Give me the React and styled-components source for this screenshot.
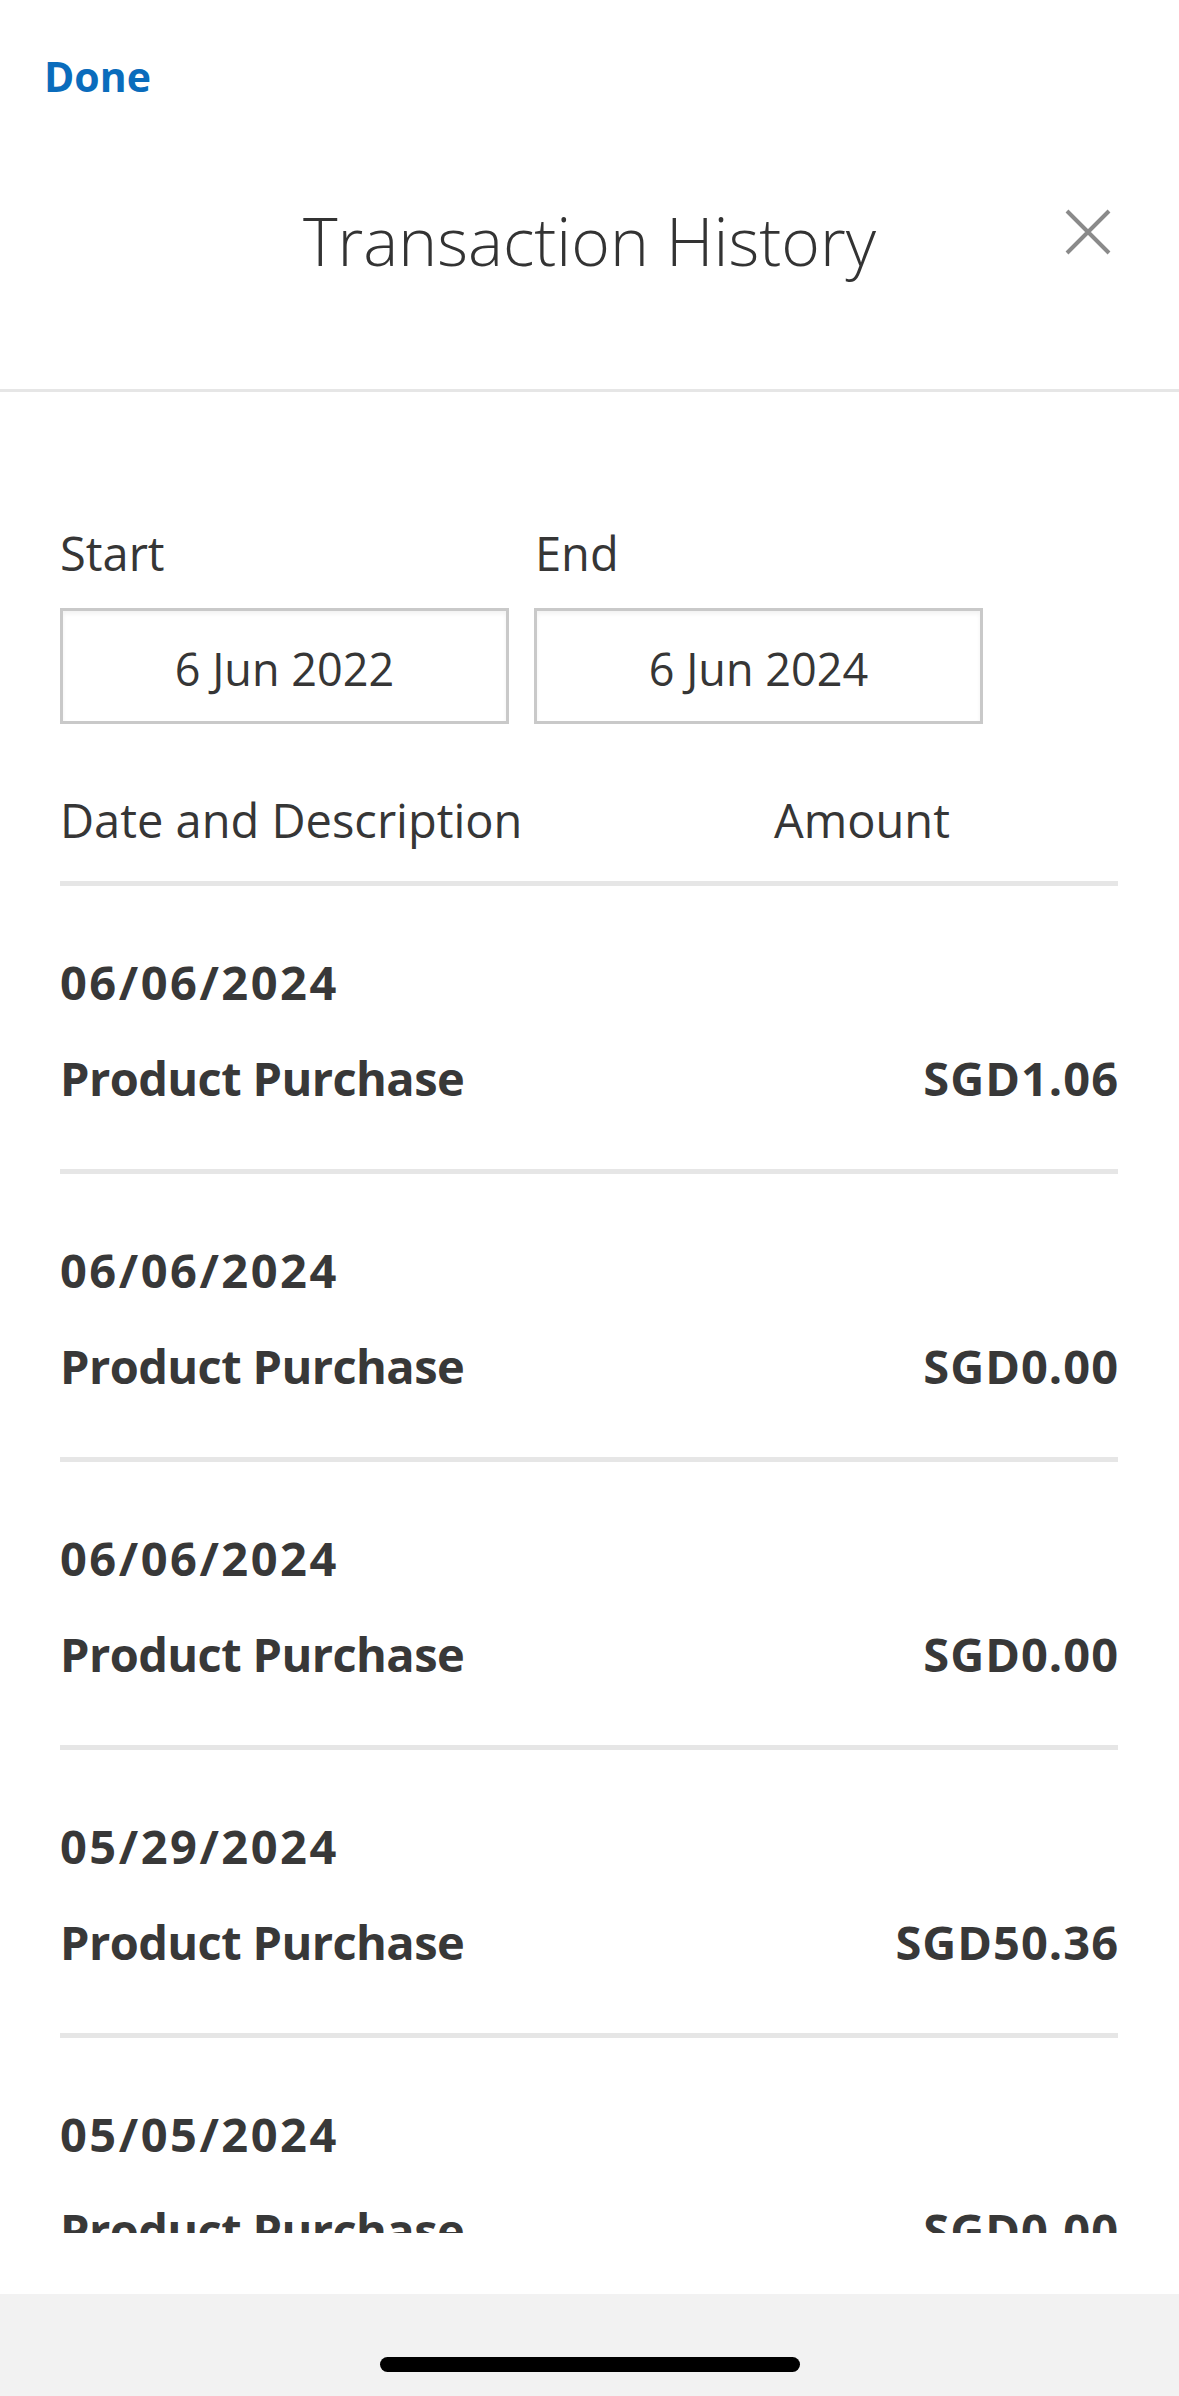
import React from 'react';
import styled, { createGlobalStyle } from 'styled-components';

const GlobalStyle = createGlobalStyle`
  * { box-sizing: border-box; }
  html, body { margin: 0; padding: 0; background: #fff; }
  body {
    font-family: "Open Sans", "Noto Sans", sans-serif;
    color: #363636;
  }
`;

const Page = styled.div`
  height: 2396px;
  display: flex;
  flex-direction: column;
  background: #fff;
`;

const Header = styled.header`
  padding-top: 56px;
  padding-bottom: 116px;
  border-bottom: 3px solid #e6e6e6;
`;

const DoneButton = styled.div`
  margin-left: 44px;
  font-size: 41px;
  line-height: 40px;
  font-weight: 700;
  color: #0a6cbc;
`;

const TitleRow = styled.div`
  margin-top: 111px;
  display: grid;
  grid-template-columns: 1fr auto 1fr;
  padding: 0 67px;
`;

const Title = styled.h1`
  grid-column: 2;
  margin: 0;
  font-size: 66px;
  line-height: 66px;
  font-weight: 300;
  color: #333;
`;

const CloseButton = styled.div`
  grid-column: 3;
  justify-self: end;
  align-self: start;
  margin-top: 1px;
  width: 48px;
  height: 48px;
`;

const Scroll = styled.div`
  flex: 1;
  min-height: 0;
  overflow: hidden;
  margin-bottom: 61px;
  padding: 138px 61px 0 60px;
`;

const RangeGrid = styled.div`
  display: grid;
  grid-template-columns: 449px 449px;
  column-gap: 25px;
`;

const RangeField = styled.div`
  display: flex;
  flex-direction: column;
`;

const FieldLabel = styled.div`
  font-size: 47px;
  line-height: 47px;
  padding-left: ${p => (p.$indent ? 1 : 0)}px;
  margin-bottom: 31px;
`;

const DateBox = styled.div`
  height: 116px;
  border: 3px solid #c9c9c9;
  box-shadow: inset 0 3px 4px rgba(0, 0, 0, 0.05);
  display: flex;
  align-items: center;
  justify-content: center;
  padding-top: 4px;
  font-size: 45px;
  line-height: 45px;
`;

const TableHead = styled.div`
  margin-top: 73px;
  display: grid;
  grid-template-columns: 714px 1fr;
  font-size: 47px;
  line-height: 47px;
  padding-bottom: 37px;
  border-bottom: 5px solid #e6e6e6;
`;

const Row = styled.div`
  padding: 73px 0 67px;
  border-bottom: 5px solid #e6e6e6;
  font-size: 47px;
  line-height: 47px;
  font-weight: 700;
  color: #383838;
`;

const RowDate = styled.div`
  margin-bottom: 49px;
  letter-spacing: 2.5px;
`;

const RowLine = styled.div`
  display: flex;
  justify-content: space-between;
`;

const Desc = styled.span`
  letter-spacing: -0.6px;
`;

const Amount = styled.span`
  letter-spacing: 1px;
  margin-right: -1px;
`;

const Footer = styled.footer`
  height: 102px;
  background: #f2f2f2;
  display: flex;
  justify-content: center;
  padding-top: 63px;
`;

const HomeBar = styled.div`
  width: 420px;
  height: 15px;
  border-radius: 8px;
  background: #000;
`;

const rows = [
  { date: '06/06/2024', desc: 'Product Purchase', amount: 'SGD1.06' },
  { date: '06/06/2024', desc: 'Product Purchase', amount: 'SGD0.00' },
  { date: '06/06/2024', desc: 'Product Purchase', amount: 'SGD0.00' },
  { date: '05/29/2024', desc: 'Product Purchase', amount: 'SGD50.36' },
  { date: '05/05/2024', desc: 'Product Purchase', amount: 'SGD0.00' },
];

export default function App() {
  return (
    <Page>
      <GlobalStyle />
      <Header>
        <DoneButton>Done</DoneButton>
        <TitleRow>
          <Title>Transaction History</Title>
          <CloseButton>
            <svg width="48" height="48" viewBox="0 0 48 48">
              <path d="M3 3 L45 45 M45 3 L3 45" stroke="#8a8a8a" strokeWidth="4" fill="none" />
            </svg>
          </CloseButton>
        </TitleRow>
      </Header>

      <Scroll>
        <RangeGrid>
          <RangeField>
            <FieldLabel>Start</FieldLabel>
            <DateBox>6 Jun 2022</DateBox>
          </RangeField>
          <RangeField>
            <FieldLabel $indent>End</FieldLabel>
            <DateBox>6 Jun 2024</DateBox>
          </RangeField>
        </RangeGrid>

        <TableHead>
          <div>Date and Description</div>
          <div>Amount</div>
        </TableHead>

        {rows.map((r, i) => (
          <Row key={i}>
            <RowDate>{r.date}</RowDate>
            <RowLine>
              <Desc>{r.desc}</Desc>
              <Amount>{r.amount}</Amount>
            </RowLine>
          </Row>
        ))}
      </Scroll>

      <Footer>
        <HomeBar />
      </Footer>
    </Page>
  );
}
